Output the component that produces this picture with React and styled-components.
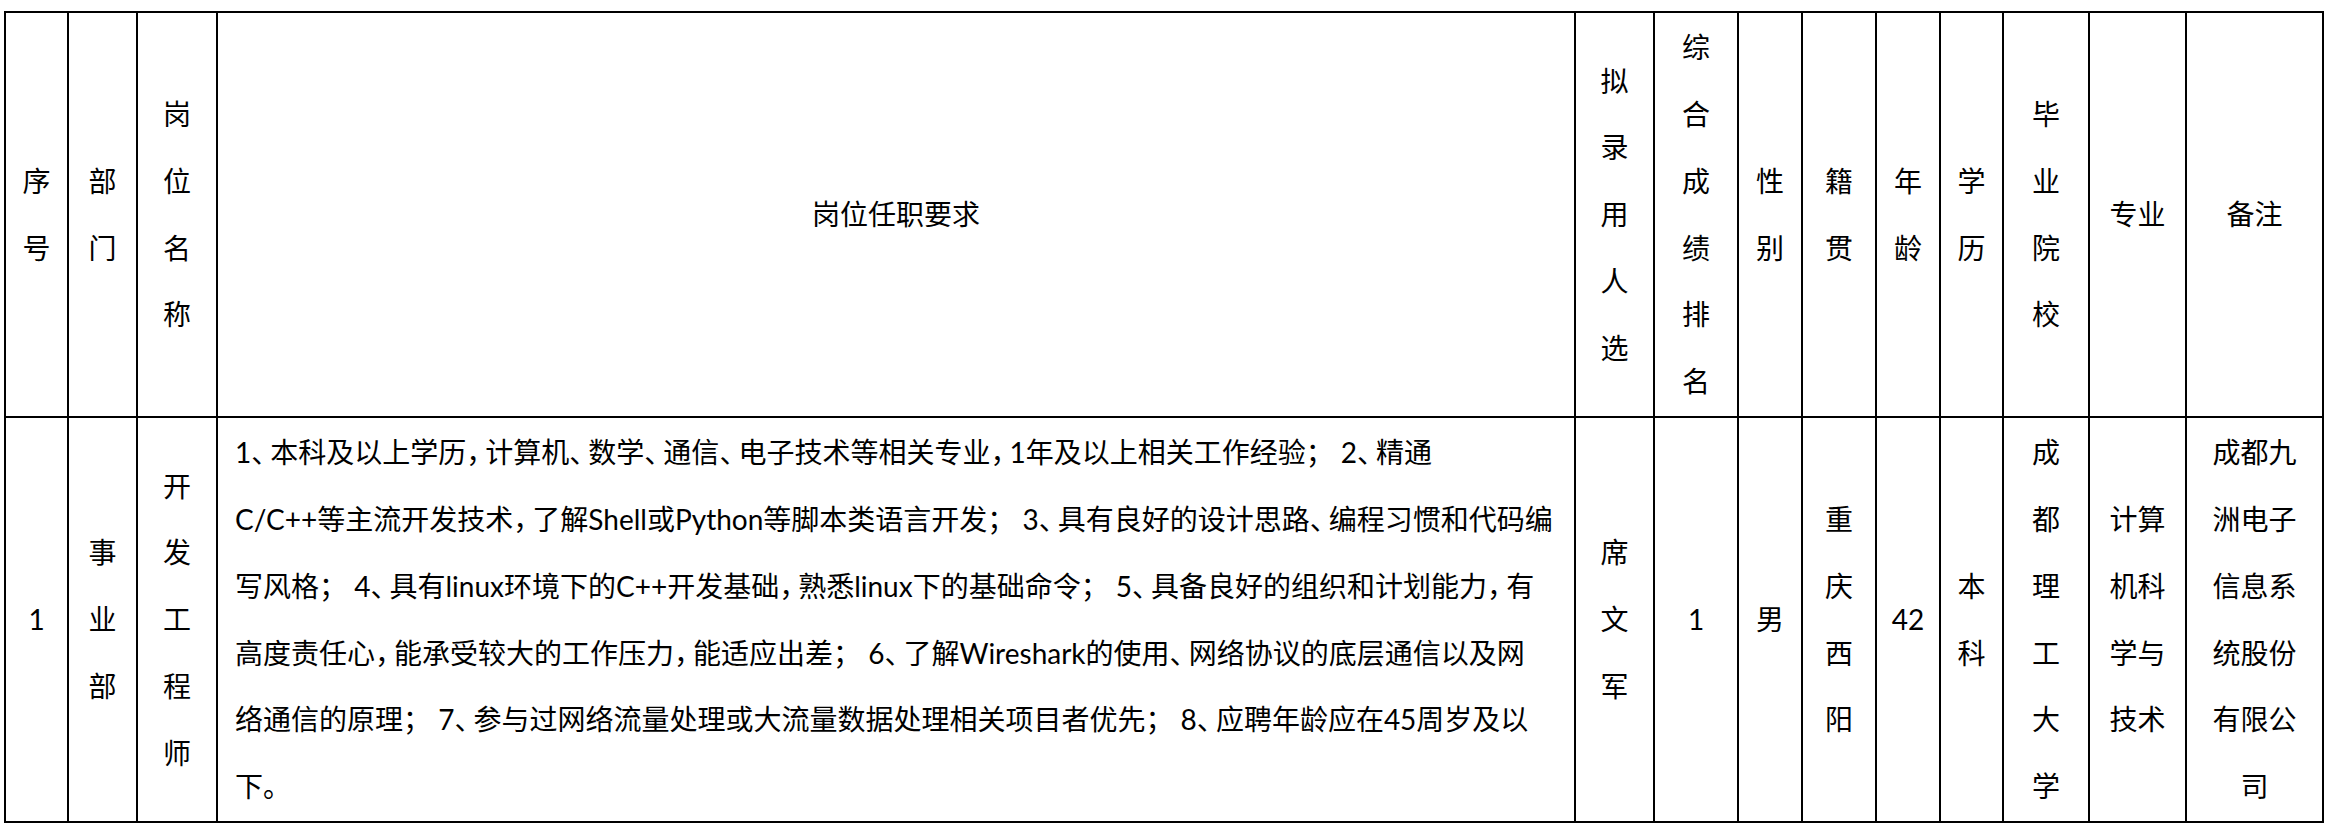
import React from 'react';
import styled, { createGlobalStyle } from 'styled-components';

const colWidths = [63, 69, 80, 1358, 79, 84, 64, 74, 64, 63, 86, 97, 137];

const headerCells = [
    ['序', '号'],
    ['部', '门'],
    ['岗', '位', '名', '称'],
    ['岗位任职要求'],
    ['拟', '录', '用', '人', '选'],
    ['综', '合', '成', '绩', '排', '名'],
    ['性', '别'],
    ['籍', '贯'],
    ['年', '龄'],
    ['学', '历'],
    ['毕', '业', '院', '校'],
    ['专业'],
    ['备注'],
];

const requirementLines = [
    '1、本科及以上学历，计算机、数学、通信、电子技术等相关专业，1年及以上相关工作经验； 2、精通',
    'C/C++等主流开发技术，了解Shell或Python等脚本类语言开发； 3、具有良好的设计思路、编程习惯和代码编',
    '写风格； 4、具有linux环境下的C++开发基础，熟悉linux下的基础命令； 5、具备良好的组织和计划能力，有',
    '高度责任心，能承受较大的工作压力，能适应出差； 6、了解Wireshark的使用、网络协议的底层通信以及网',
    '络通信的原理； 7、参与过网络流量处理或大流量数据处理相关项目者优先； 8、应聘年龄应在45周岁及以',
    '下。',
];

const bodyCells = [
    ['1'],
    ['事', '业', '部'],
    ['开', '发', '工', '程', '师'],
    null,
    ['席', '文', '军'],
    ['1'],
    ['男'],
    ['重', '庆', '西', '阳'],
    ['42'],
    ['本', '科'],
    ['成', '都', '理', '工', '大', '学'],
    ['计算', '机科', '学与', '技术'],
    ['成都九', '洲电子', '信息系', '统股份', '有限公', '司'],
];

// Word squeezes the 、 and ， marks, so they get a narrower advance
const squeeze = (text) =>
    text.split(/([、，])/).map((part, i) =>
        part === '、' || part === '，' ? <Punct key={i}>{part}</Punct> : part
    );

const App = () => {
    return (
        <Page>
            <GlobalStyle />
            <Table>
                <colgroup>
                    {colWidths.map((w, i) => (
                        <col key={i} style={{ width: w }} />
                    ))}
                </colgroup>
                <tbody>
                    <Row>
                        {headerCells.map((lines, i) => (
                            <Cell key={i}>
                                {lines.map((t, j) => <Line key={j}>{t}</Line>)}
                            </Cell>
                        ))}
                    </Row>
                    <Row>
                        {bodyCells.map((lines, i) =>
                            lines ? (
                                <Cell key={i}>
                                    {lines.map((t, j) => <Line key={j}>{t}</Line>)}
                                </Cell>
                            ) : (
                                <TextCell key={i}>
                                    {requirementLines.map((t, j) => (
                                        <Line key={j}>{squeeze(t)}</Line>
                                    ))}
                                </TextCell>
                            )
                        )}
                    </Row>
                </tbody>
            </Table>
        </Page>
    );
};

export default App;

/* ========= CSS STYLED COMPONENTS ========= */

const GlobalStyle = createGlobalStyle`
    html, body {
        margin: 0;
        background: #ffffff;
    }
`;

const Page = styled.div`
    padding: 11px 0 0 4px;
    font-family: Lato, "Noto Sans CJK SC", sans-serif;
    font-size: 28px;
    color: #000;
`;

const Table = styled.table`
    border-collapse: collapse;
    table-layout: fixed;
    width: 2320px;
`;

const Row = styled.tr`
    height: 405px;
`;

const Cell = styled.td`
    border: 2px solid #000;
    padding: 0;
    text-align: center;
    vertical-align: middle;
`;

const TextCell = styled(Cell)`
    text-align: left;
    padding-left: 17px;
`;

const Line = styled.div`
    line-height: 66.7px;
    white-space: nowrap;
`;

const Punct = styled.span`
    letter-spacing: -9px;
`;
